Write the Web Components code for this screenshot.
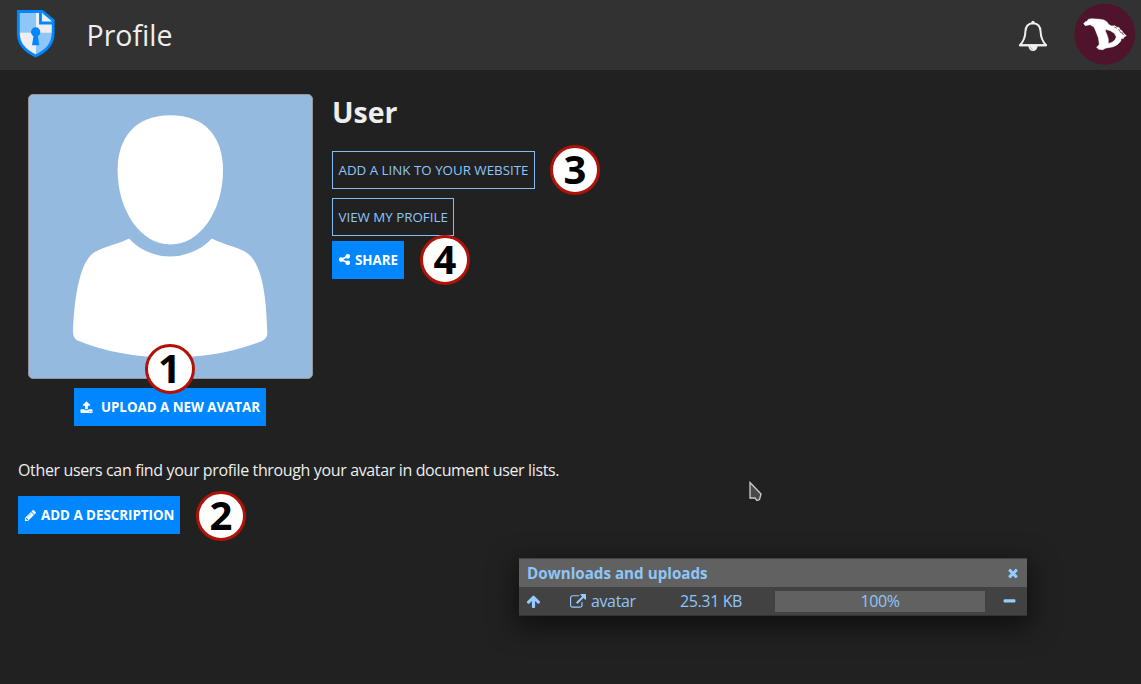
<!DOCTYPE html>
<html lang="en">
<head>
<meta charset="utf-8">
<title>Profile</title>
<style>
html,body{margin:0;height:100%;overflow:hidden;background:#212121}
body{font:15.2px/22px "Open Sans","Noto Sans",sans-serif;color:#eee}
</style>
</head>
<body>
<profile-page></profile-page>
<script>
const ICONS={
share:'M1344 1024q133 0 226.5 93.5t93.5 226.5-93.5 226.5-226.5 93.5-226.5-93.5-93.5-226.5q0-12 2-34l-360-180q-92 86-218 86-133 0-226.5-93.5t-93.5-226.5 93.5-226.5 226.5-93.5q126 0 218 86l360-180q-2-22-2-34 0-133 93.5-226.5t226.5-93.5 226.5 93.5 93.5 226.5-93.5 226.5-226.5 93.5q-126 0-218-86l-360 180q2 22 2 34t-2 34l360 180q92-86 218-86z',
upload:'M1344 1472q0-26-19-45t-45-19-45 19-19 45 19 45 45 19 45-19 19-45zm256 0q0-26-19-45t-45-19-45 19-19 45 19 45 45 19 45-19 19-45zm128-224v320q0 40-28 68t-68 28h-1472q-40 0-68-28t-28-68v-320q0-40 28-68t68-28h427q21 56 70.5 92t110.5 36h256q61 0 110.5-36t70.5-92h427q40 0 68 28t28 68zm-325-648q-17 40-59 40h-256v448q0 26-19 45t-45 19h-256q-26 0-45-19t-19-45v-448h-256q-42 0-59-40-17-39 14-69l448-448q18-19 45-19t45 19l448 448q31 30 14 69z',
pencil:'M491 1536l91-91-235-235-91 91v107h128v128h107zm523-928q0-22-22-22-10 0-17 7l-542 542q-7 7-7 17 0 22 22 22 10 0 17-7l542-542q7-7 7-17zm-54-192l416 416-832 832h-416v-416zm683 96q0 53-37 90l-166 166-416-416 166-165q36-38 90-38 53 0 91 38l235 234q37 39 37 91z',
external:'M1408 928v320q0 119-84.5 203.5t-203.5 84.5h-832q-119 0-203.5-84.5t-84.5-203.5v-832q0-119 84.500-203.500t203.500-84.500h704q14 0 23 9t9 23v64q0 14-9 23t-23 9h-704q-66 0-113 47t-47 113v832q0 66 47 113t113 47h832q66 0 113-47t47-113v-320q0-14 9-23t23-9h64q14 0 23 9t9 23zm384-864v512q0 26-19 45t-45 19-45-19l-176-176-652 652q-10 10-23 10t-23-10l-114-114q-10-10-10-23t10-23l652-652-176-176q-19-19-19-45t19-45 45-19h512q26 0 45 19t19 45z',
up:'M1675 971q0 51-37 90l-75 75q-38 38-91 38-54 0-90-38l-294-293v704q0 52-37.500 84.500t-90.500 32.500h-128q-53 0-90.500-32.500t-37.500-84.500v-704l-294 293q-36 38-90 38t-90-38l-75-75q-38-38-38-90 0-53 38-91l651-651q35-37 90-37 54 0 91 37l651 651q37 39 37 91z',
times:'M1490 1322q0 40-28 68l-136 136q-28 28-68 28t-68-28l-294-294-294 294q-28 28-68 28t-68-28l-136-136q-28-28-28-68t28-68l294-294-294-294q-28-28-28-68t28-68l136-136q28-28 68-28t68 28l294 294 294-294q28-28 68-28t68 28l136 136q28 28 28 68t-28 68l-294 294 294 294q28 28 28 68z',
minus:'M1600 736v192q0 40-28 68t-68 28h-1216q-40 0-68-28t-28-68v-192q0-40 28-68t68-28h1216q40 0 68 28t28 68z'
};
function define(name,html){
  customElements.define(name,class extends HTMLElement{
    constructor(){super();const t=document.createElement('template');t.innerHTML=html;this.attachShadow({mode:'open'}).append(t.content.cloneNode(true));}
  });
}
customElements.define('fa-icon',class extends HTMLElement{
  connectedCallback(){
    if(this.shadowRoot)return;
    this.attachShadow({mode:'open'}).innerHTML=`<style>:host{display:inline-flex;flex:none;width:var(--s,14px);height:var(--s,14px)}svg{width:100%;height:100%;overflow:visible;fill:currentColor}</style><svg viewBox="0 0 1792 1792"><path d="${ICONS[this.getAttribute('name')]}"/></svg>`;
  }
});
define('app-logo',`<style>:host{display:block;width:40px;height:50px}svg{display:block}</style>
<svg width="40" height="50" viewBox="18 9 120 150">
<path d="M25 19H94L130 46V84C130 118 107 140 77 153C48 140 25 118 25 84Z" fill="#eee"/>
<path d="M25 19H78V83H25Z" fill="#8ec6f8"/>
<path d="M78 83H130V84C130 118 107 140 78 153Z" fill="#8ec6f8"/>
<path d="M25 19.500H97L129.500 46V84C129.500 117 107 139.500 77 152.500C48 139.500 25 117 25 84Z" fill="none" stroke="#0087ff" stroke-width="8.500"/>
<path d="M91.500 19V54H130" fill="none" stroke="#0087ff" stroke-width="8.500"/>
<circle cx="77" cy="81" r="14" fill="#0087ff"/><path d="M71 90H83L88 121H66Z" fill="#0087ff"/>
</svg>`);
define('bell-icon',`<style>:host{display:block}svg{display:block}</style>
<svg width="30" height="32" viewBox="0 0 30 32">
<path d="M15 3.300C10.200 3.600 7.600 6.800 7.400 11.500C7.200 18.500 5.500 21.500 1.900 25.200H28.100C24.500 21.500 22.800 18.500 22.600 11.500C22.400 6.800 19.800 3.600 15 3.300Z" fill="none" stroke="#eee" stroke-width="2" stroke-linejoin="round"/>
<path d="M1.500 24.300H28.500V26.300H1.500Z M10.300 26H19.700C19.300 29 17.500 31 15 31S10.700 29 10.300 26Z" fill="#eee"/><circle cx="15" cy="2.300" r="1.600" fill="#eee"/>
<path d="M12.300 27q.3 2 2.300 2.500" stroke="#999" fill="none" stroke-width=".7"/>
</svg>`);
define('user-badge',`<style>:host{display:block}svg{display:block}</style>
<svg width="62" height="62" viewBox="222 9 186 186"><circle cx="314.500" cy="102.500" r="91.500" fill="#4f142c"/>
<path fill="#fff" fill-rule="evenodd" stroke="#fff" stroke-width="1.500" stroke-linejoin="round" d="M251 71L256 65L261 64L265 58L275 56L300 58L312 60L320 65L327 74L335 78L345 77L349 81L358 83L360 89L366 92L369 98L379 107L371 112L370 116L364 115L362 124L352 134L340 140L325 143L318 144L308 149L296 148L290 142L298 133L295 113L288 95L282 81L270 74L256 77ZM316 88L317 95L322 107L325 118L325 131L338 126L345 119L349 111L343 100L331 92Z"/>
<path d="M343 81l8 4M355 87l9 13M365 96l6 10" stroke="#4f142c" stroke-width="2" fill="none"/></svg>`);
define('app-header',`<style>
:host{display:flex;align-items:center;height:70px;box-sizing:border-box;padding:0 5px 0 16px;background:#323232}
app-logo{margin-top:-4px}h1{margin:0 auto 0 30.500px;font-size:28.500px;line-height:38px;font-weight:400}
bell-icon{margin:0 26.500px 0 0;padding-top:1px}user-badge{margin-top:-2px}</style>
<app-logo></app-logo><h1><slot></slot></h1><bell-icon></bell-icon><user-badge></user-badge>`);
define('action-button',`<style>
:host{display:inline-flex;width:max-content;box-sizing:border-box;height:38px;align-items:center;padding:0 6px;gap:4px;font-size:13.330px;line-height:18px;white-space:nowrap;background:#0087ff;color:#fff;font-weight:700;--s:13px}
:host([outline]){background:none;border:1px solid #86bdf0;color:#8ec6f8;font-weight:400;padding:0 5.500px}
</style><slot name="icon"></slot><span><slot></slot></span>`);
define('step-marker',`<style>
:host{position:absolute;box-sizing:border-box;width:50px;height:50px;border:3px solid #b01208;border-radius:50%;background:#fff;color:#000;font-weight:700;font-size:40px;line-height:42px;text-align:center}
</style><slot></slot>`);
define('avatar-picture',`<style>:host{display:block;width:285px;height:285px;box-sizing:border-box;border:1px solid #959595;border-radius:5px;overflow:hidden;background:#95badf}svg{display:block}</style>
<svg width="283" height="283" viewBox="29 95 283 283"><path fill="#fff" d="M170.500 115.300C205 115.300 223 137 223 170C223 211 200 244.500 170.500 244.500S117.600 211 117.600 170C117.600 137 136 115.300 170.500 115.300Z"/>
<path fill="#fff" d="M129 238.600C151 262.500 189 262.500 211.800 238.600C226 246 241 247.500 249 254.500C263 267 266.500 300 267.300 333C267.300 337 265.500 339 262 341C235 352 203 357.500 170.500 357.500S105 352 77.500 340.500C74.500 339 73 336 73 332C74 300 79 267 91 255C99 247.500 115 245.500 129 238.600Z"/></svg>`);
define('transfer-panel',`<style>
:host{position:absolute;left:519px;top:558px;width:508px;height:58px;box-sizing:border-box;border-bottom:1px solid #333;border-top:1px solid #444;background:#424242;color:#8ec6f8;box-shadow:0 8px 26px 4px rgba(0,0,0,.5);display:grid;grid-template-rows:28px 28px}
div{display:flex;align-items:center}
.t{background:#616161;padding:0 7px 0 8px;justify-content:space-between;font-weight:700;--s:14px}
.r{font-size:16px;letter-spacing:-.38px;display:grid;grid-template-columns:43px 110px 95px 210px 1fr;padding-left:8px;padding-right:10px;--s:15px}
.n{gap:5px;--s:16px}.p{background:#616161;height:21px;justify-content:center}.m{justify-content:flex-end}
fa-icon{color:#95cbff}.n fa-icon{margin-top:2px}.r fa-icon[name=up]{margin-left:-1px}
</style><div class="t"><span><slot></slot></span><fa-icon name="times"></fa-icon></div>
<div class="r"><fa-icon name="up"></fa-icon><div class="n"><fa-icon name="external"></fa-icon><span>avatar</span></div><span>25.31 KB</span><div class="p">100%</div><div class="m"><fa-icon name="minus"></fa-icon></div></div>`);
define('mouse-cursor',`<style>:host{position:absolute;left:749px;top:481px}svg{display:block}</style>
<svg width="14" height="22" viewBox="0 0 14 22"><path d="M1 1.500L12 13L10.500 18.500L8 19.500L6 17H1Z" fill="#4a4a4a" stroke="#ccc" stroke-width="1.300"/></svg>`);
define('profile-page',`<style>
:host{display:block;position:relative;width:1141px;height:684px;overflow:hidden}
main{padding:24px 18px 0}.top{display:flex;gap:9px;height:333px}
.left{width:305px;box-sizing:border-box;display:flex;flex-direction:column;align-items:center;gap:9.400px}
.right{display:flex;flex-direction:column;align-items:flex-start}
h2{font-size:28.500px;line-height:38px;margin:-1px 0 20px}
.link{margin-bottom:9.400px}.view{margin-bottom:4.600px}
p{margin:32px 0 15px;font-size:16px;letter-spacing:-.36px}
.up{gap:8px;margin-right:1px}
</style>
<app-header>Profile</app-header>
<main><div class="top"><div class="left"><avatar-picture></avatar-picture><action-button class="up"><fa-icon slot="icon" name="upload"></fa-icon>UPLOAD A NEW AVATAR</action-button></div>
<div class="right"><h2>User</h2><action-button class="link" outline>ADD A LINK TO YOUR WEBSITE</action-button><action-button class="view" outline>VIEW MY PROFILE</action-button><action-button><fa-icon slot="icon" name="share"></fa-icon>SHARE</action-button></div></div>
<p>Other users can find your profile through your avatar in document user lists.</p>
<action-button><fa-icon slot="icon" name="pencil"></fa-icon>ADD A DESCRIPTION</action-button></main>
<step-marker style="left:144.500px;top:344px">1</step-marker><step-marker style="left:196px;top:491px">2</step-marker>
<step-marker style="left:550px;top:145px">3</step-marker><step-marker style="left:420px;top:235px">4</step-marker>
<mouse-cursor></mouse-cursor><transfer-panel>Downloads and uploads</transfer-panel>`);
</script>
</body>
</html>
